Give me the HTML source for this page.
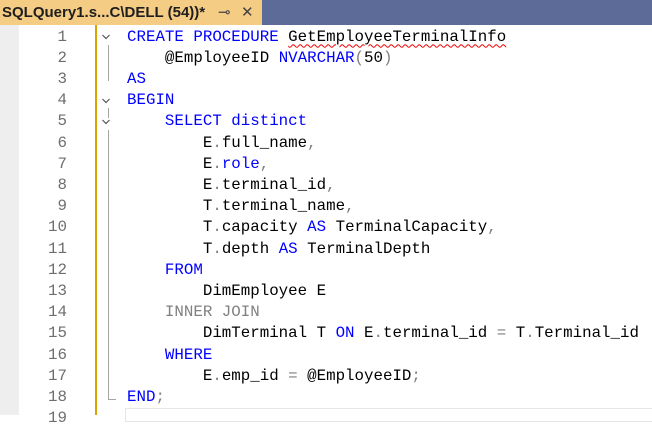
<!DOCTYPE html><html><head><style>
body{margin:0;width:652px;height:415px;overflow:hidden;background:#fff;font-family:"Liberation Mono",monospace;position:relative}
.tabbar{position:absolute;left:0;top:0;width:652px;height:25px;background:#5d6b99}
.tab{position:absolute;left:0;top:0;width:262px;height:25px;background:#f5cc84;font:bold 15px "Liberation Sans",sans-serif;color:#1e1e1e;line-height:25px;padding-left:2px;box-sizing:border-box}
.tab .p{position:absolute;left:218px;top:0;font-weight:normal;color:#444}
.tab .x{position:absolute;left:241px;top:0;font-weight:normal;color:#444;font-size:15px}
.gut{position:absolute;left:0;top:25px;width:19px;height:390px;background:#eeeeee}
.ybar{position:absolute;left:95px;top:25px;width:2px;height:390px;background:#d9a300}
.fold{position:absolute;left:108px;width:1px;background:#a5a5a5}
.ln{position:absolute;left:19px;width:48px;text-align:right;color:#6e6e6e;font-size:15.8px}
.code{position:absolute;left:127px;white-space:pre;font-size:15.8px;color:#000}
.k{color:#0000ff}.g{color:#808080}
.cur{position:absolute;left:125px;top:408px;width:527px;height:12px;border:1px solid #e6e6e6;border-right:none}
.sq{text-decoration:underline wavy #e00;text-decoration-thickness:1px;text-underline-offset:3px}
.chev{position:absolute;left:102px;width:8px;height:8px}
</style></head><body>
<div class="tabbar"><div class="tab">SQLQuery1.s...C\DELL (54))*<span class="p">⊸</span><span class="x">✕</span></div></div>
<div class="gut"></div>
<div class="ybar"></div>
<div class="fold" style="top:45px;height:36px"></div>
<div class="fold" style="top:108px;height:10px"></div>
<div class="fold" style="top:130px;height:270px"></div>
<div style="position:absolute;left:108px;top:399px;width:8px;height:1px;background:#a5a5a5"></div>
<svg class="chev" style="top:33px" viewBox="0 0 8 8"><path d="M0.5 2L4 5.5L7.5 2" fill="none" stroke="#555" stroke-width="1.2"/></svg>
<svg class="chev" style="top:97px" viewBox="0 0 8 8"><path d="M0.5 2L4 5.5L7.5 2" fill="none" stroke="#555" stroke-width="1.2"/></svg>
<svg class="chev" style="top:118px" viewBox="0 0 8 8"><path d="M0.5 2L4 5.5L7.5 2" fill="none" stroke="#555" stroke-width="1.2"/></svg>
<div class="cur"></div>
<div id="lines"></div>
<script>
const L=[
'<span class="k">CREATE PROCEDURE</span> <span class="sq">GetEmployeeTerminalInfo</span>',
'    @EmployeeID <span class="k">NVARCHAR</span><span class="g">(</span>50<span class="g">)</span>',
'<span class="k">AS</span>',
'<span class="k">BEGIN</span>',
'    <span class="k">SELECT distinct</span>',
'        E<span class="g">.</span>full_name<span class="g">,</span>',
'        E<span class="g">.</span><span class="k">role</span><span class="g">,</span>',
'        E<span class="g">.</span>terminal_id<span class="g">,</span>',
'        T<span class="g">.</span>terminal_name<span class="g">,</span>',
'        T<span class="g">.</span>capacity <span class="k">AS</span> TerminalCapacity<span class="g">,</span>',
'        T<span class="g">.</span>depth <span class="k">AS</span> TerminalDepth',
'    <span class="k">FROM</span>',
'        DimEmployee E',
'    <span class="g">INNER JOIN</span>',
'        DimTerminal T <span class="k">ON</span> E<span class="g">.</span>terminal_id <span class="g">=</span> T<span class="g">.</span>Terminal_id',
'    <span class="k">WHERE</span>',
'        E<span class="g">.</span>emp_id <span class="g">=</span> @EmployeeID<span class="g">;</span>',
'<span class="k">END</span><span class="g">;</span>',''];
let h='';
L.forEach((s,i)=>{const t=27.5+i*21.2;h+=`<div class="ln" style="top:${t}px">${i+1}</div><div class="code" style="top:${t}px">${s}</div>`;});
document.getElementById('lines').innerHTML=h;
</script>
</body></html>
